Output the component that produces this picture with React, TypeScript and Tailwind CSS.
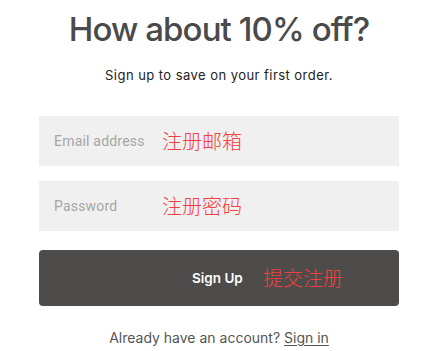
export default function App() {
  return (
    <div className="min-h-[351px] bg-white font-['Inter','Noto_Sans_CJK_SC',sans-serif]">
      <div className="mx-auto w-[360px] translate-x-px pt-[7px]">
        <h1 className="text-center text-[33px] leading-[44px] font-medium tracking-[-0.9px] text-[#4a4a4a]">
          How about 10% off?
        </h1>
        <p className="mt-[15px] text-center text-[13px] leading-[18px] tracking-[0.45px] text-[#222]">
          Sign up to save on your first order.
        </p>

        <div className="mt-[32px] flex flex-col gap-[15px]">
          <div className="flex h-[50px] items-center bg-[#f0f0f0] pl-[15px]">
            <span className="w-[108px] font-['Roboto',sans-serif] text-[14px] tracking-[0.2px] text-[#a6a6a6]">Email address</span>
            <span className="font-['Noto_Sans_CJK_SC',sans-serif] text-[20px] font-light text-[#f43f3f]">注册邮箱</span>
          </div>
          <div className="flex h-[50px] items-center bg-[#f0f0f0] pl-[15px]">
            <span className="w-[108px] font-['Roboto',sans-serif] text-[14px] tracking-[0.2px] text-[#a6a6a6]">Password</span>
            <span className="font-['Noto_Sans_CJK_SC',sans-serif] text-[20px] font-light text-[#f43f3f]">注册密码</span>
          </div>
        </div>

        <button className="mt-[19px] flex h-[56px] w-full items-center rounded-[4px] bg-[#4d4c4a] pl-[153px]">
          <span className="w-[71px] text-left text-[13.5px] font-semibold text-white">Sign Up</span>
          <span className="font-['Noto_Sans_CJK_SC',sans-serif] text-[20px] font-light text-[#f43f3f]">提交注册</span>
        </button>

        <p className="mt-[22px] text-center text-[14px] leading-[20px] text-[#555]">
          Already have an account? <span className="underline underline-offset-2">Sign in</span>
        </p>
      </div>
    </div>
  );
}
